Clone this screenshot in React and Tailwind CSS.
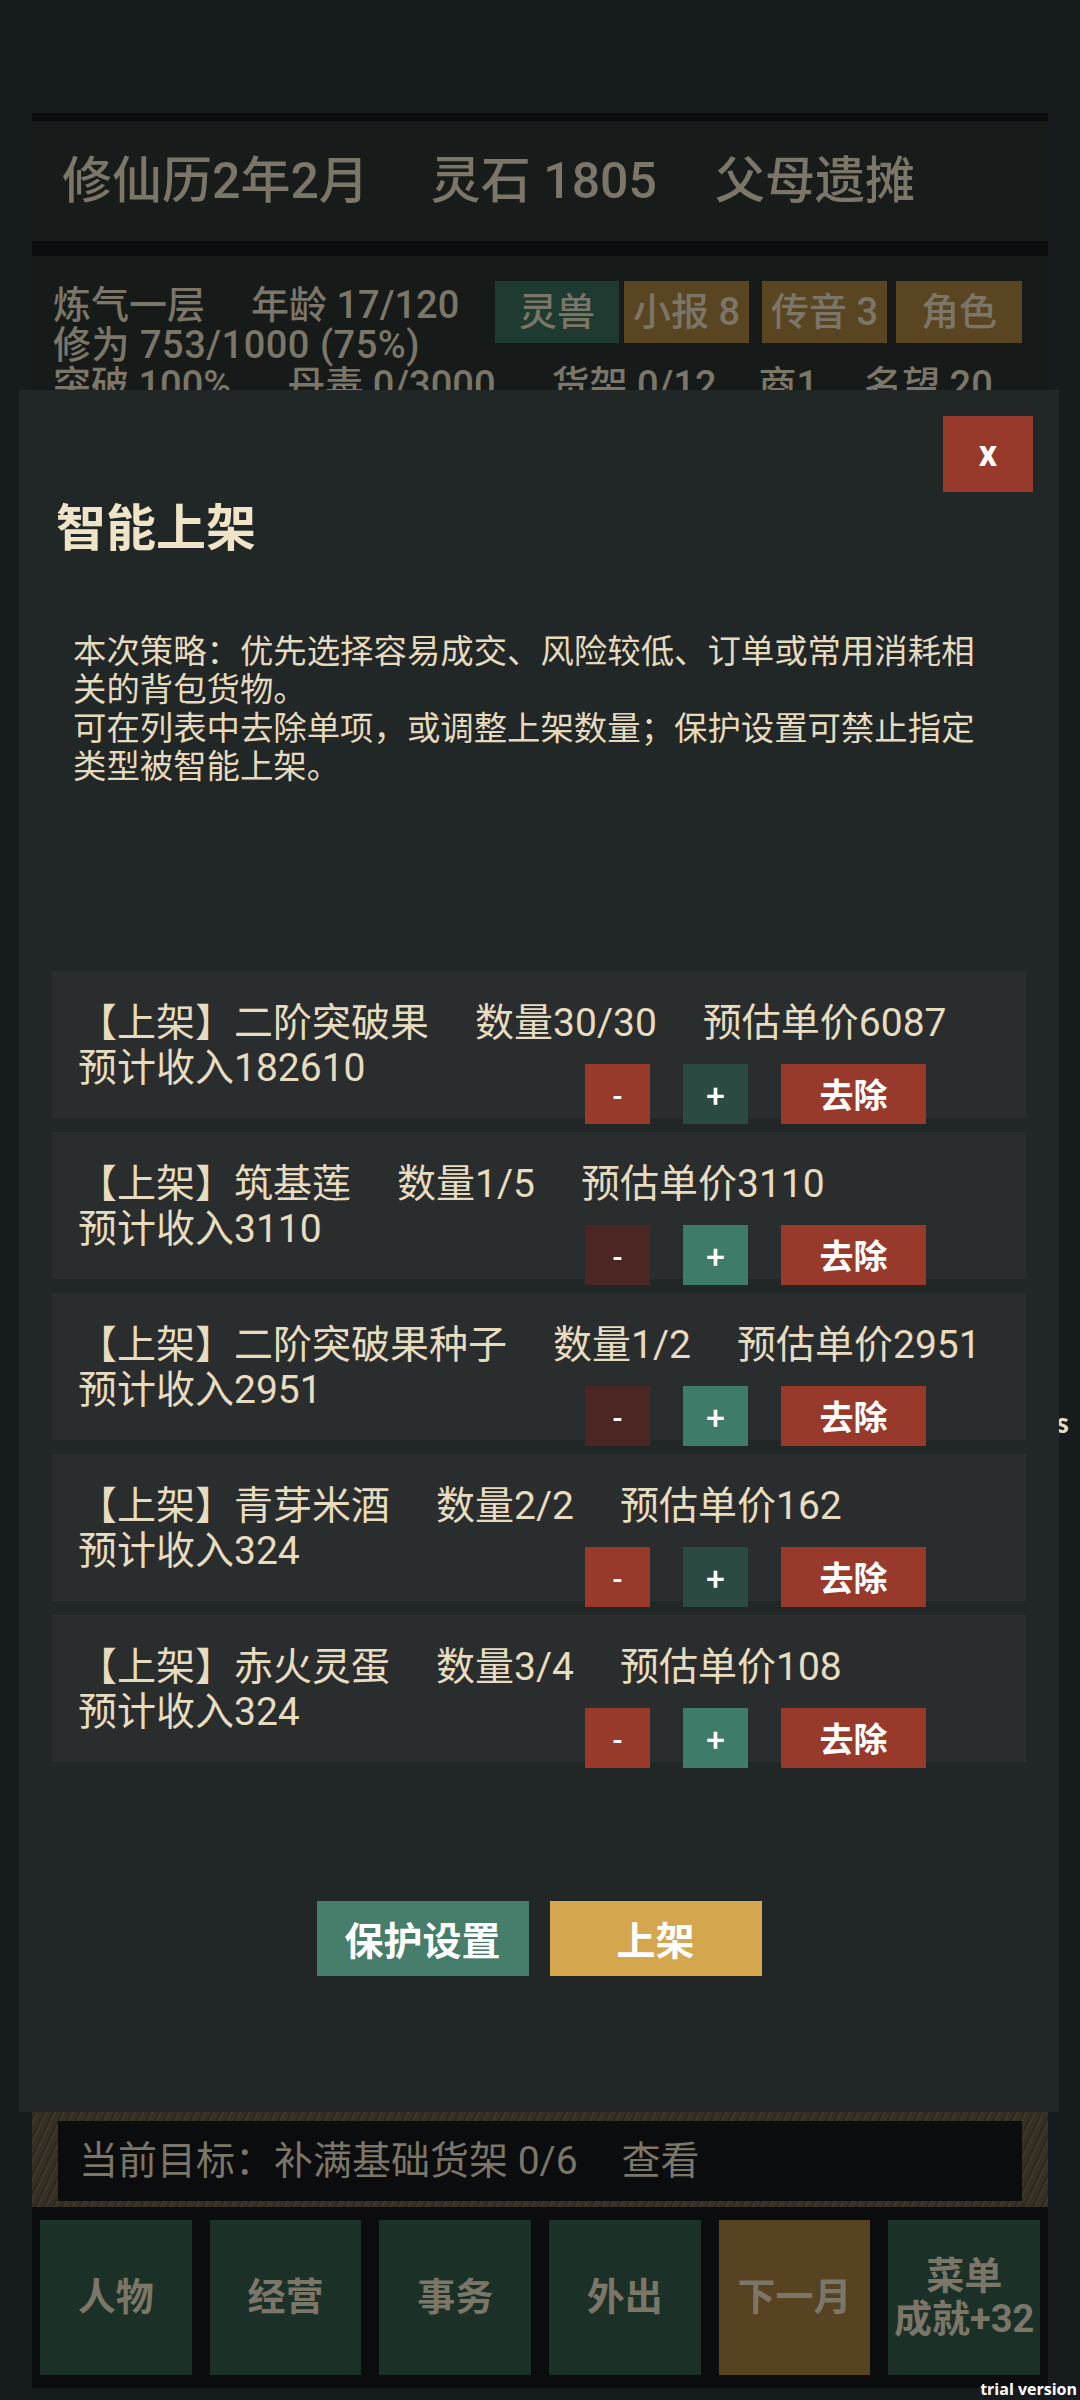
import React from 'react';

const items = [
  { name: '二阶突破果', qty: '30/30', price: 6087, income: 182610, canMinus: true, canPlus: false },
  { name: '筑基莲', qty: '1/5', price: 3110, income: 3110, canMinus: false, canPlus: true },
  { name: '二阶突破果种子', qty: '1/2', price: 2951, income: 2951, canMinus: false, canPlus: true },
  { name: '青芽米酒', qty: '2/2', price: 162, income: 324, canMinus: true, canPlus: false },
  { name: '赤火灵蛋', qty: '3/4', price: 108, income: 324, canMinus: true, canPlus: true },
];

const navs = ['人物', '经营', '事务', '外出'];

const ListItem = ({ item }) => (
  <div className="h-[147px] bg-[#2a2d2e] pt-[30px] pl-[26px] text-[39px] leading-[45px] text-[#e8dcc0] font-['Roboto','Noto_Sans_CJK_SC',sans-serif]">
    <div className="flex whitespace-nowrap">
      <span>【上架】{item.name}</span>
      <span className="ml-[46px]">数量{item.qty}</span>
      <span className="ml-[46px]">预估单价{item.price}</span>
    </div>
    <div className="flex items-start">
      <div className="w-[507px] shrink-0">预计收入{item.income}</div>
      <div className="mt-[18px] flex gap-[33px] text-white font-bold font-['Noto_Sans_CJK_SC',sans-serif]">
        <button className={`w-[65px] h-[60px] text-[28px] leading-none ${item.canMinus ? 'bg-[#973a2c]' : 'bg-[#4c2623]'}`}>-</button>
        <button className={`w-[65px] h-[60px] text-[32px] leading-none ${item.canPlus ? 'bg-[#3f7b69]' : 'bg-[#2a4a42]'}`}>+</button>
        <button className="w-[145px] h-[60px] bg-[#973a2c] text-[34px] leading-none">去除</button>
      </div>
    </div>
  </div>
);

export default function App() {
  return (
    <div className="relative w-[1080px] h-[2400px] overflow-hidden bg-[#161b1e] font-['Noto_Sans_CJK_SC',sans-serif]">
      {/* background game screen, dimmed */}
      <div className="flex flex-col h-full font-['Roboto','Noto_Sans_CJK_SC',sans-serif] font-medium text-[#7b7668]">
        <div className="mt-[113px] mx-[32px] h-[8px] bg-[#0a0c0e]" />
        <div className="mx-[32px] h-[120px] bg-[#171c1b] flex items-center pl-[30px] text-[50px] whitespace-nowrap">
          <span>修仙历2年2月</span>
          <span className="ml-[62px]">灵石 1805</span>
          <span className="ml-[58px]">父母遗摊</span>
        </div>
        <div className="mx-[32px] h-[15px] bg-[#0a0c0e]" />
        <div className="mx-[32px] h-[220px] bg-[#161b1a] pt-[29px] pl-[21px] pr-[26px] text-[38px] leading-[40px]">
          <div className="float-right -mt-[4px] flex text-[38px] leading-[62px]">
            <span className="w-[124px] h-[62px] bg-[#1e3a31] text-center">灵兽</span>
            <span className="ml-[5px] w-[125px] h-[62px] bg-[#5a4522] text-center">小报 8</span>
            <span className="ml-[13px] w-[125px] h-[62px] bg-[#5a4522] text-center">传音 3</span>
            <span className="ml-[9px] w-[126px] h-[62px] bg-[#5a4522] text-center">角色</span>
          </div>
          <div className="whitespace-nowrap">
            <span>炼气一层</span>
            <span className="ml-[46px]">年龄 17/120</span>
          </div>
          <div className="tracking-[0.5px]">修为 753/1000 (75%)</div>
          <div className="clear-both whitespace-nowrap">
            <span>突破 100%</span>
            <span className="ml-[56px]">丹毒 0/3000</span>
            <span className="ml-[56px]">货架 0/12</span>
            <span className="ml-[42px]">商1</span>
            <span className="ml-[46px]">名望 20</span>
          </div>
        </div>

        <div className="flex-1" />

        <div className="mx-[32px] px-[26px] pt-[9px] pb-[6px] bg-[#3a3428] bg-[repeating-linear-gradient(115deg,#3d3629_0px,#2a261e_3px,#41392b_5px,#2f2a21_8px)]">
          <div className="h-[80px] bg-[#0a0c0d] flex items-center pl-[21px] text-[39px] font-normal whitespace-nowrap">
            <span>当前目标：补满基础货架 0/6</span>
            <span className="ml-[44px]">查看</span>
          </div>
        </div>
        <div className="mx-[32px] h-[181px] bg-[#0a0c0d] flex gap-[18px] px-[8px] pt-[13px] pb-[13px] font-bold text-[38px]">
          {navs.map(n => (
            <div key={n} className="flex-1 bg-[#1b3128] flex items-center justify-center">{n}</div>
          ))}
          <div className="flex-1 bg-[#574221] flex items-center justify-center">下一月</div>
          <div className="flex-1 bg-[#1b3128] flex flex-col items-center justify-center leading-[43px] whitespace-nowrap">
            <span>菜单</span>
            <span>成就+32</span>
          </div>
        </div>
        <div className="h-[12px]" />
      </div>

      {/* stray glyph peeking beside the dialog */}
      <span className="absolute left-[1056px] top-[1402px] text-[26px] font-bold text-[#e8dcc0]">s</span>

      {/* dialog */}
      <div className="absolute left-[19px] top-[390px] w-[1040px] h-[1722px] bg-[#212627] flex flex-col">
        <div className="flex justify-end pt-[26px] pr-[26px]">
          <button className="w-[90px] h-[76px] bg-[#973a2c] text-white font-bold text-[36px] leading-none font-['Roboto',sans-serif]">x</button>
        </div>
        <div className="ml-[37px] mt-[2px] h-[60px] leading-[60px] text-[50px] font-bold text-[#f0e4c8]">智能上架</div>
        <div className="ml-[54px] mt-[76px] w-[920px] text-[33.4px] leading-[38.3px] text-[#e6dabe]">
          <p>本次策略：优先选择容易成交、风险较低、订单或常用消耗相关的背包货物。</p>
          <p>可在列表中去除单项，或调整上架数量；保护设置可禁止指定类型被智能上架。</p>
        </div>
        <div className="mx-[33px] mt-[188px] flex flex-col gap-[14px]">
          {items.map(it => (
            <ListItem key={it.name} item={it} />
          ))}
        </div>
        <div className="mt-[139px] flex justify-center gap-[21px] text-white font-bold text-[39px]">
          <button className="w-[212px] h-[75px] bg-[#467e6b]">保护设置</button>
          <button className="w-[212px] h-[75px] bg-[#d4a64e]">上架</button>
        </div>
      </div>

      <span className="absolute right-[3px] bottom-[1px] text-[16px] leading-[20px] font-bold text-white font-['Open_Sans',sans-serif]">trial version</span>
    </div>
  );
}
